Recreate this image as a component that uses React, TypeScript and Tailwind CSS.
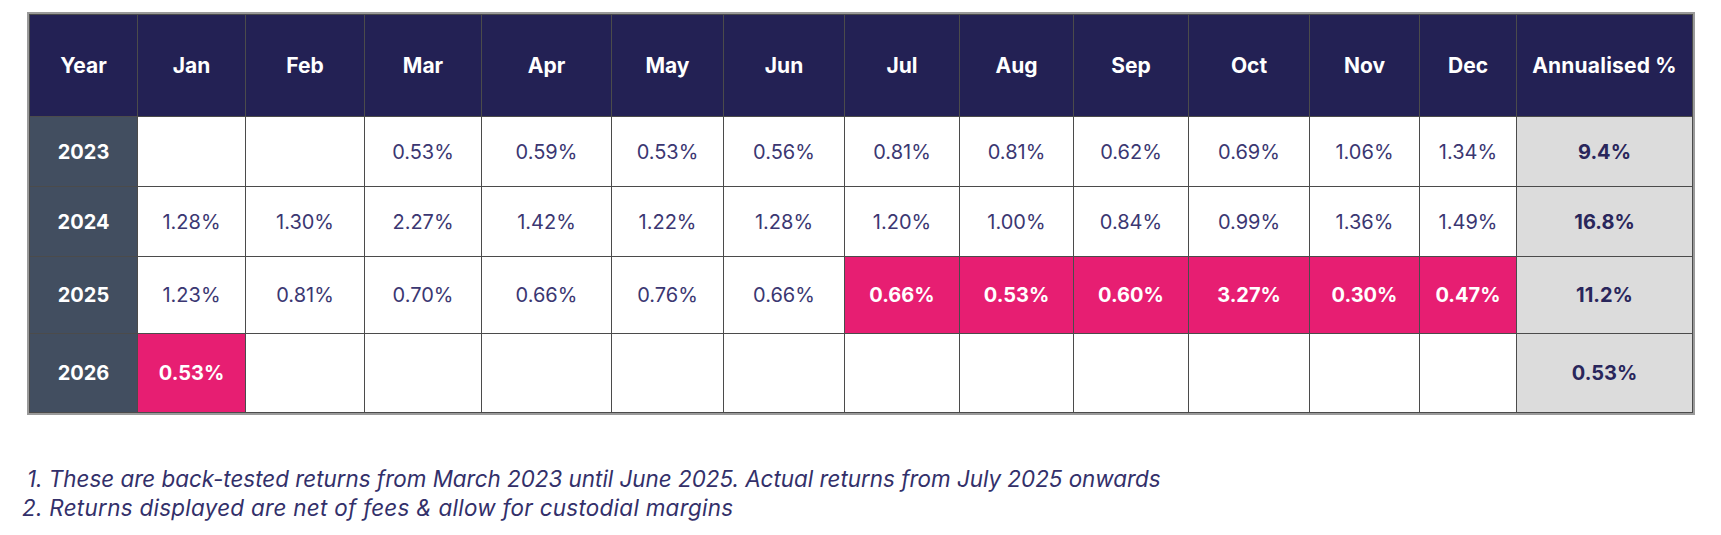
import React from 'react';

const months = ['Jan', 'Feb', 'Mar', 'Apr', 'May', 'Jun', 'Jul', 'Aug', 'Sep', 'Oct', 'Nov', 'Dec'];

type Row = {
  year: string;
  values: string[];
  hot: number[];
  total: string;
  height: string;
};

const rows: Row[] = [
  {
    year: '2023',
    values: ['', '', '0.53%', '0.59%', '0.53%', '0.56%', '0.81%', '0.81%', '0.62%', '0.69%', '1.06%', '1.34%'],
    hot: [],
    total: '9.4%',
    height: 'h-[70px]',
  },
  {
    year: '2024',
    values: ['1.28%', '1.30%', '2.27%', '1.42%', '1.22%', '1.28%', '1.20%', '1.00%', '0.84%', '0.99%', '1.36%', '1.49%'],
    hot: [],
    total: '16.8%',
    height: 'h-[70px]',
  },
  {
    year: '2025',
    values: ['1.23%', '0.81%', '0.70%', '0.66%', '0.76%', '0.66%', '0.66%', '0.53%', '0.60%', '3.27%', '0.30%', '0.47%'],
    hot: [6, 7, 8, 9, 10, 11],
    total: '11.2%',
    height: 'h-[77px]',
  },
  {
    year: '2026',
    values: ['0.53%', '', '', '', '', '', '', '', '', '', '', ''],
    hot: [0],
    total: '0.53%',
    height: 'h-[79px]',
  },
];

const colWidths = [
  'w-[108px]', 'w-[108px]', 'w-[119px]', 'w-[117px]', 'w-[130px]', 'w-[112px]', 'w-[121px]',
  'w-[115px]', 'w-[114px]', 'w-[115px]', 'w-[121px]', 'w-[110px]', 'w-[97px]', 'w-[176px]',
];

const cell = 'border border-[#4b4b4b] text-center align-middle p-0';

export default function App() {
  return (
    <div className="min-h-screen bg-white font-['Inter','Liberation_Sans',sans-serif]">
      <div className="pl-[29px] pt-[14px]">
        <table className="table-fixed border-collapse w-[1663px] outline-2 outline-[#9a9a9a]">
          <colgroup>
            {colWidths.map((w, i) => (
              <col key={i} className={w} />
            ))}
          </colgroup>
          <thead>
            <tr className="h-[102px] bg-[#232154] text-white">
              <th className={`${cell} text-[21px] font-bold`}>Year</th>
              {months.map((m) => (
                <th key={m} className={`${cell} text-[21px] font-bold`}>
                  {m}
                </th>
              ))}
              <th className={`${cell} text-[21px] font-bold tracking-[0.2px]`}>Annualised %</th>
            </tr>
          </thead>
          <tbody>
            {rows.map((row) => (
              <tr key={row.year} className={row.height}>
                <td className={`${cell} bg-[#424e60] text-white text-[20px] font-bold`}>{row.year}</td>
                {row.values.map((v, i) =>
                  row.hot.includes(i) ? (
                    <td key={i} className={`${cell} bg-[#e71e72] text-white text-[20px] font-bold`}>
                      {v}
                    </td>
                  ) : (
                    <td key={i} className={`${cell} bg-white text-[#3b3772] text-[20px]`}>
                      {v}
                    </td>
                  )
                )}
                <td className={`${cell} bg-[#dcdcdc] text-[#29265b] text-[20px] font-bold`}>{row.total}</td>
              </tr>
            ))}
          </tbody>
        </table>
      </div>

      <div className="mt-[51px] text-[22.4px] leading-[29px] italic text-[#33306a]">
        <p className="pl-[27px]">1. These are back-tested returns from March 2023 until June 2025. Actual returns from July 2025 onwards</p>
        <p className="pl-[22px] tracking-[0.3px]">2. Returns displayed are net of fees &amp; allow for custodial margins</p>
      </div>
    </div>
  );
}
